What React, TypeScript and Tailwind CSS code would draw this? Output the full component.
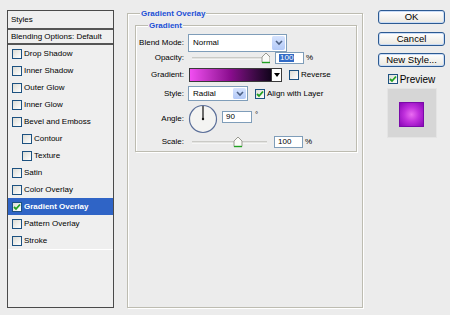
import React from "react";

const STYLE_ROWS = [
  { key: "drop", label: "Drop Shadow" },
  { key: "inshadow", label: "Inner Shadow" },
  { key: "outglow", label: "Outer Glow" },
  { key: "inglow", label: "Inner Glow" },
  { key: "bevel", label: "Bevel and Emboss" },
  { key: "contour", label: "Contour", indent: true },
  { key: "texture", label: "Texture", indent: true },
  { key: "satin", label: "Satin" },
  { key: "color", label: "Color Overlay" },
  { key: "gradient", label: "Gradient Overlay", checked: true, active: true },
  { key: "pattern", label: "Pattern Overlay" },
  { key: "stroke", label: "Stroke" },
];

function Check({ checked }: { checked?: boolean }) {
  return (
    <span className="w-[10px] h-[10px] border border-[#1c5180] bg-linear-to-br from-[#dcdcd5] to-white flex items-center justify-center shrink-0">
      {checked && (
        <svg width="8" height="8" viewBox="0 0 8 8">
          <path d="M1 4 L3 6 L7 1.5" stroke="#21a121" strokeWidth="1.8" fill="none" />
        </svg>
      )}
    </span>
  );
}

function DropButton() {
  return (
    <span className="w-[14px] h-full border-l border-white rounded-[2px] bg-linear-to-b from-[#d6e3fe] to-[#b3c9f7] flex items-center justify-center shrink-0">
      <svg width="8" height="6" viewBox="0 0 8 6">
        <path d="M1 1 L4 4 L7 1" stroke="#4d6185" strokeWidth="1.6" fill="none" />
      </svg>
    </span>
  );
}

function Slider({ width, thumb }: { width: number; thumb: number }) {
  return (
    <svg width={width} height="12" viewBox={`0 0 ${width} 12`} className="shrink-0">
      <line x1="4" y1="6" x2={width - 2} y2="6" stroke="#a8a8a0" strokeWidth="1" />
      <line x1="4" y1="7" x2={width - 2} y2="7" stroke="#ffffff" strokeWidth="1" />
      <path
        d={`M${thumb - 4} 10.5 L${thumb - 4} 5 L${thumb} 1 L${thumb + 4} 5 L${thumb + 4} 10.5 Z`}
        fill="#fbfbf8"
        stroke="#9a9a92"
        strokeWidth="1"
      />
      <line x1={thumb - 4} y1="10.5" x2={thumb + 4} y2="10.5" stroke="#21a121" strokeWidth="1.4" />
    </svg>
  );
}

function Field({ children, w }: { children: React.ReactNode; w: string }) {
  return (
    <span className={`${w} h-[12px] border border-[#7f9db9] bg-white flex items-center pl-[3px] text-[8px] leading-none shrink-0`}>
      {children}
    </span>
  );
}

function Label({ children }: { children: React.ReactNode }) {
  return <span className="w-[48px] text-right text-[8px] leading-none shrink-0">{children}</span>;
}

export default function App() {
  return (
    <div className="w-[450px] h-[315px] bg-[#ececec] flex items-start pt-[10px] pl-[7px] font-['Liberation_Sans',Arial,sans-serif] text-black overflow-hidden">
      {/* styles list */}
      <div className="w-[107px] h-[298px] border border-[#4a4a4a] bg-[#efefef] flex flex-col shrink-0">
        <div className="h-[19px] border-b-2 border-[#555] flex items-center pl-[3px] text-[8px]">Styles</div>
        <div className="h-[15px] border-b-2 border-[#555] flex items-center pl-[3px] text-[8px]">
          Blending Options: Default
        </div>
        {STYLE_ROWS.map((r) => (
          <div
            key={r.key}
            className={`h-[17px] flex items-center gap-[2px] text-[8px] ${r.indent ? "pl-[14px]" : "pl-[4px]"} ${
              r.active ? "bg-[#2f64c6] text-white font-bold" : ""
            }`}
          >
            <Check checked={r.checked} />
            <span>{r.label}</span>
          </div>
        ))}
        <div className="border-t border-white" />
      </div>

      {/* settings group */}
      <div className="relative mt-[3px] ml-[13px] w-[236px] h-[295px] border border-[#bdbcb1] shadow-[inset_1px_1px_0_#fff,1px_1px_0_#fff] shrink-0">
        <span className="absolute left-[12px] top-[-5px] bg-[#ececec] px-[1px] text-[8px] leading-[10px] font-bold text-[#1b4fd6]">
          Gradient Overlay
        </span>
        <div className="relative mt-[11px] ml-[7px] w-[222px] h-[127px] border border-[#bdbcb1] shadow-[inset_1px_1px_0_#fff,1px_1px_0_#fff] pt-[8px] flex flex-col">
          <span className="absolute left-[12px] top-[-5px] bg-[#ececec] px-[1px] text-[8px] leading-[10px] font-bold text-[#1b4fd6]">
            Gradient
          </span>

          <div className="h-[18px] flex items-center gap-[4px]">
            <Label>Blend Mode:</Label>
            <span className="w-[99px] h-[18px] border border-[#7f9db9] bg-white flex items-center p-[1px]">
              <span className="flex-1 pl-[3px] text-[8px]">Normal</span>
              <DropButton />
            </span>
          </div>

          <div className="h-[12px] flex items-center gap-[4px]">
            <Label>Opacity:</Label>
            <Slider width={82} thumb={78} />
            <span className="ml-[1px]">
              <Field w="w-[29px]">
                <span className="bg-[#316ac5] text-white px-[1px]">100</span>
              </Field>
            </span>
            <span className="text-[8px] -ml-[2px]">%</span>
          </div>

          <div className="mt-[4px] h-[14px] flex items-center gap-[4px]">
            <Label>Gradient:</Label>
            <span className="ml-[1px] flex h-[14px]">
              <span className="w-[83px] h-[14px] border border-[#3a3a3a] bg-linear-to-r from-[#f24ef2] via-[#8a0c8e] to-[#12041c]" />
              <span className="w-[10px] h-[14px] border border-l-0 border-[#3a3a3a] bg-white flex items-center justify-center">
                <svg width="6" height="4" viewBox="0 0 6 4">
                  <path d="M0 0 L6 0 L3 4 Z" fill="#000" />
                </svg>
              </span>
            </span>
            <span className="ml-[3px] flex items-center gap-[2px] text-[8px]">
              <Check />
              Reverse
            </span>
          </div>

          <div className="mt-[4px] h-[15px] flex items-center gap-[4px]">
            <Label>Style:</Label>
            <span className="w-[60px] h-[15px] border border-[#7f9db9] bg-white flex items-center p-[1px]">
              <span className="flex-1 pl-[3px] text-[8px]">Radial</span>
              <DropButton />
            </span>
            <span className="ml-[3px] flex items-center gap-[2px] text-[8px]">
              <Check checked />
              Align with Layer
            </span>
          </div>

          <div className="mt-[3px] h-[30px] flex items-center gap-[4px]">
            <Label>Angle:</Label>
            <svg width="30" height="30" viewBox="0 0 30 30" className="shrink-0">
              <circle cx="15" cy="15" r="13.5" fill="#f4f4f2" stroke="#5b6f99" strokeWidth="1.2" />
              <line x1="15" y1="15" x2="15" y2="2" stroke="#111" strokeWidth="1.2" />
              <circle cx="15" cy="15" r="1.2" fill="#111" />
            </svg>
            <span className="-mt-[4px] flex items-start gap-[3px]">
              <Field w="w-[30px]">90</Field>
              <span className="text-[8px] leading-none">°</span>
            </span>
          </div>

          <div className="mt-[2px] h-[12px] flex items-center gap-[4px]">
            <Label>Scale:</Label>
            <Slider width={81} thumb={50} />
            <span className="ml-[1px]">
              <Field w="w-[29px]">100</Field>
            </span>
            <span className="text-[8px] -ml-[2px]">%</span>
          </div>
        </div>
      </div>

      {/* buttons */}
      <div className="ml-[15px] w-[67px] flex flex-col shrink-0">
        {["OK", "Cancel", "New Style..."].map((b, i) => (
          <button
            key={b}
            className={`h-[14px] w-full rounded-[3px] border border-[#2c5a92] bg-linear-to-b from-white to-[#eae8e1] shadow-[inset_0_0_0_1px_#c9dcf6] text-[9.5px] leading-none ${
              i === 0 ? "" : i === 1 ? "mt-[8px]" : "mt-[7px]"
            }`}
          >
            {b}
          </button>
        ))}
        <div className="mt-[7px] h-[10px] flex items-center justify-center gap-[2px] text-[10px]">
          <Check checked />
          Preview
        </div>
        <div className="mt-[4px] mx-auto w-[50px] h-[50px] bg-[#d6d6d6] border border-[#e4e4e4] flex justify-center pt-[13px]">
          <span className="w-[25px] h-[25px] border border-[#7a0aa8] bg-[radial-gradient(circle,#ea6cf2_0%,#c030dc_45%,#8a06b8_100%)]" />
        </div>
      </div>
    </div>
  );
}
